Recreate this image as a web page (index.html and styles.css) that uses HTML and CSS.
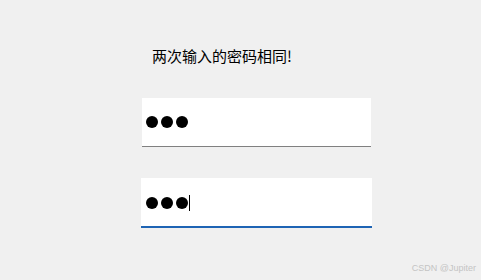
FILE: index.html
```html
<!DOCTYPE html>
<html>
<head>
<meta charset="utf-8">
<link rel="stylesheet" href="styles.css">
</head>
<body>
<div class="page">
  <div class="title">两次输入的密码相同!</div>
  <div class="field">
    <span class="dot"></span><span class="dot"></span><span class="dot"></span>
  </div>
  <div class="field focus">
    <span class="dot"></span><span class="dot"></span><span class="dot"></span><span class="caret"></span>
  </div>
</div>
<div class="mark">CSDN @Jupiter</div>
</body>
</html>
```
FILE: styles.css
```css
html, body {
  margin: 0;
  padding: 0;
  background: #f0f0f0;
  width: 481px;
  height: 280px;
  overflow: hidden;
  position: relative;
  font-family: "Noto Sans CJK SC", "Liberation Sans", sans-serif;
}
.page {
  display: flex;
  flex-direction: column;
  padding-left: 142px;
  padding-top: 46px;
}
.title {
  font-size: 15px;
  line-height: 20px;
  font-weight: 400;
  color: #000;
  padding-left: 10px;
  height: 20px;
  margin-bottom: 32px;
}
.field {
  width: 229px;
  height: 49px;
  background: #fff;
  border-bottom: 1px solid #808080;
  box-sizing: border-box;
  display: flex;
  align-items: center;
  padding-left: 4px;
  gap: 3px;
  margin-bottom: 31px;
  padding-top: 0;
}
.field.focus {
  border-bottom: 2px solid #1e64b4;
  width: 231px;
  margin-left: -1px;
  padding-left: 5px;
  height: 50px;
  padding-top: 1px;
}
.dot {
  width: 12px;
  height: 12px;
  border-radius: 50%;
  background: #000;
}
.caret {
  width: 1px;
  height: 16px;
  background: #000;
  margin-left: -2px;
}
.mark {
  position: absolute;
  right: 5px;
  bottom: 7px;
  font-family: "Liberation Sans", sans-serif;
  font-size: 9px;
  color: #c4c4c4;
}
```
